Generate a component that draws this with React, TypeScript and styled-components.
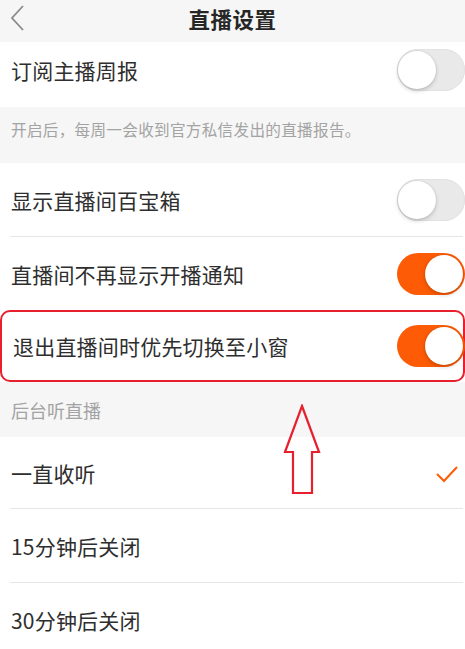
import * as React from 'react';
import styled, { createGlobalStyle } from 'styled-components';

const colors = {
	text: '#2e2e2e',
	muted: '#a3a3a3',
	pageGrey: '#f6f6f6',
	line: '#e6e6e6',
	orange: '#fd5b05',
	red: '#e8202e',
};

const GlobalStyle = createGlobalStyle`
	html, body {
		margin: 0;
		padding: 0;
		background: ${colors.pageGrey};
		overflow: hidden;
	}
	body {
		font-family: "Noto Sans CJK SC", "Noto Sans", sans-serif;
		color: ${colors.text};
	}
`;

const Page = styled.div`
	position: relative;
	width: 465px;
	height: 649px;
	overflow: hidden;
	background-color: ${colors.pageGrey};
`;

const Header = styled.div`
	position: relative;
	height: 42px;
	display: flex;
	align-items: center;
	justify-content: center;
	background-color: ${colors.pageGrey};
`;

const BackButton = styled.div`
	position: absolute;
	left: 8px;
	top: 4px;
	width: 20px;
	height: 28px;
`;

const Title = styled.h1`
	margin: -6px 0 0 0;
	font-size: 21.5px;
	font-weight: 700;
	letter-spacing: 0.5px;
	color: #262626;
`;

const Group = styled.div`
	display: flex;
	flex-direction: column;
	background-color: #fff;
`;

const Row = styled.div<{ $height: number; $highlight?: boolean; $divider?: boolean; $padBottom?: number }>`
	position: relative;
	flex: none;
	display: flex;
	align-items: center;
	justify-content: space-between;
	box-sizing: border-box;
	height: ${({ $height }) => $height}px;
	padding: 0 0 ${({ $padBottom }) => $padBottom || 0}px 11px;
	border: ${({ $highlight }) => ($highlight ? `2px solid ${colors.red}` : '2px solid transparent')};
	border-left-width: ${({ $highlight }) => ($highlight ? '2px' : '0')};
	border-radius: ${({ $highlight }) => ($highlight ? '10px' : '0')};

	&::after {
		content: '';
		display: ${({ $divider }) => ($divider ? 'block' : 'none')};
		position: absolute;
		left: 10px;
		right: 0;
		bottom: -2px;
		height: 1px;
		background-color: ${colors.line};
	}
`;

const Label = styled.span`
	font-size: 21px;
	color: ${colors.text};
	letter-spacing: 0.2px;
`;

const Note = styled.div`
	height: 56px;
	box-sizing: border-box;
	padding: 11px 0 0 11px;
	font-size: 15.6px;
	color: ${colors.muted};
	letter-spacing: 0.3px;
`;

const SectionTitle = styled.div`
	height: 55px;
	box-sizing: border-box;
	display: flex;
	align-items: center;
	padding-left: 11px;
	font-size: 18px;
	color: ${colors.muted};
`;

const Track = styled.div<{ $on: boolean }>`
	position: relative;
	flex: none;
	width: 68px;
	height: 42px;
	box-sizing: border-box;
	border-radius: 21px;
	margin-right: -2px;
	background-color: ${({ $on }) => ($on ? colors.orange : '#e9e9e9')};
	box-shadow: ${({ $on }) => ($on ? 'none' : 'inset 0 0 0 1px #e2e2e2')};
`;

const Knob = styled.div<{ $on: boolean }>`
	position: absolute;
	top: 2px;
	left: ${({ $on }) => ($on ? '28px' : '1px')};
	width: 38px;
	height: 38px;
	border-radius: 50%;
	background-color: #fff;
	box-shadow: 0 2px 4px rgba(0, 0, 0, 0.18), 0 0 0 1px rgba(0, 0, 0, 0.04);
`;

const Check = styled.svg`
	flex: none;
	width: 24px;
	height: 18px;
	margin: 2px 4px 0 0;
`;

const ArrowOverlay = styled.svg`
	position: absolute;
	left: 282px;
	top: 404px;
	width: 42px;
	height: 92px;
`;

const Toggle: React.FC<{ on: boolean }> = ({ on }) => (
	<Track $on={on}>
		<Knob $on={on} />
	</Track>
);

export default function App() {
	return (
		<Page>
			<GlobalStyle />
			<Header>
				<BackButton>
					<svg width="20" height="28" viewBox="0 0 20 28">
						<path d="M15 2 L4 14 L15 26" fill="none" stroke="#8a8a8a" strokeWidth="1.8" />
					</svg>
				</BackButton>
				<Title>直播设置</Title>
			</Header>

			<Group>
				<Row $height={65} $padBottom={10}>
					<Label>订阅主播周报</Label>
					<Toggle on={false} />
				</Row>
			</Group>
			<Note>开启后，每周一会收到官方私信发出的直播报告。</Note>

			<Group>
				<Row $height={74} $divider>
					<Label>显示直播间百宝箱</Label>
					<Toggle on={false} />
				</Row>
				<Row $height={73}>
					<Label>直播间不再显示开播通知</Label>
					<Toggle on={true} />
				</Row>
				<Row $height={72} $highlight>
					<Label>退出直播间时优先切换至小窗</Label>
					<Toggle on={true} />
				</Row>
			</Group>

			<SectionTitle>后台听直播</SectionTitle>

			<Group>
				<Row $height={72} $divider>
					<Label>一直收听</Label>
					<Check viewBox="0 0 24 18">
						<path d="M2 9 L9 16 L22 2" fill="none" stroke={colors.orange} strokeWidth="2" />
					</Check>
				</Row>
				<Row $height={74} $divider>
					<Label>15分钟后关闭</Label>
				</Row>
				<Row $height={74}>
					<Label>30分钟后关闭</Label>
				</Row>
			</Group>

			<ArrowOverlay viewBox="0 0 42 92">
				<path
					d="M20 2 L37 48 L30 48 L30 89 L11 89 L11 48 L3 48 Z"
					fill="none"
					stroke={colors.red}
					strokeWidth="2.2"
				/>
			</ArrowOverlay>
		</Page>
	);
}
